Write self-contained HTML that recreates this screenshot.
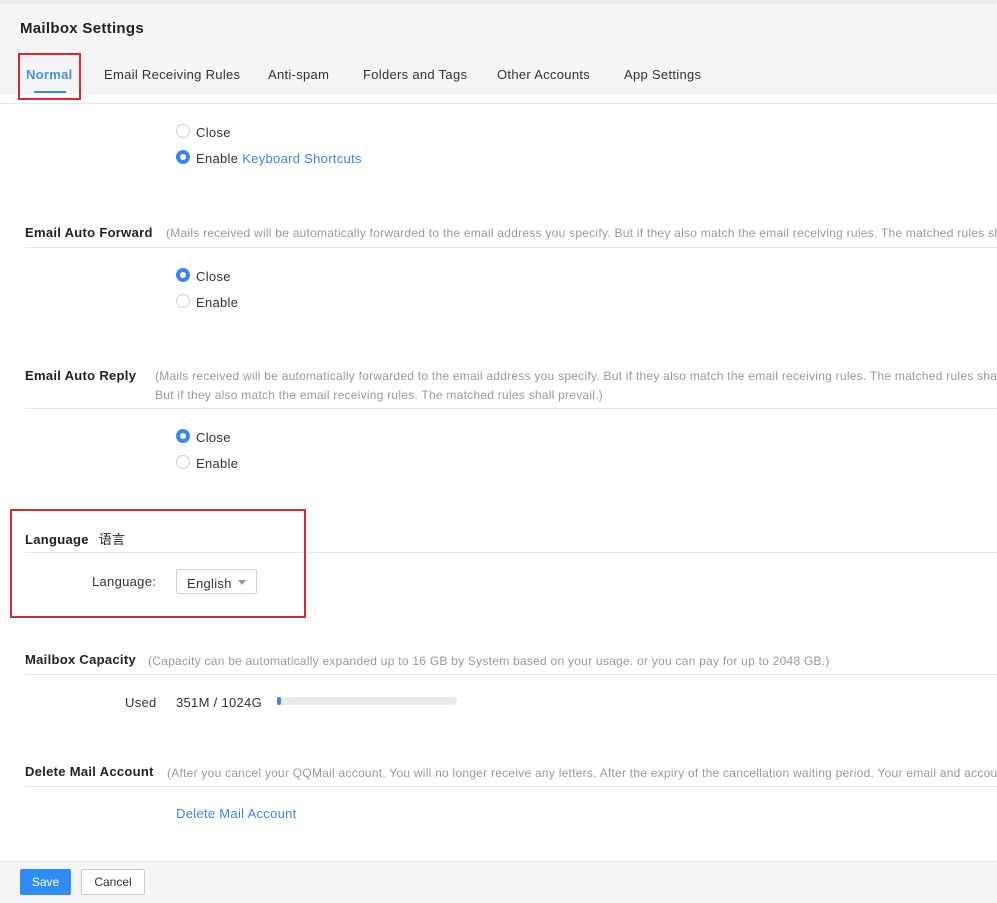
<!DOCTYPE html>
<html><head><meta charset="utf-8"><style>
*{margin:0;padding:0;box-sizing:border-box}
html,body{width:997px;height:903px;overflow:hidden}
body{background:#fff;font-family:"Liberation Sans","Noto Sans CJK SC",sans-serif;color:#333;font-size:13px;letter-spacing:0.3px}
#w{position:relative;width:997px;height:903px;overflow:hidden}
.a{position:absolute;white-space:nowrap}
.x{margin-top:2px}
.hdr{position:absolute;left:0;top:0;width:997px;height:94px;background:#f4f5f7;border-top:4px solid #ebebeb}
.t{font-weight:bold;font-size:13px;color:#222}
.d{font-size:12px;color:#999;letter-spacing:0.25px}
.line{position:absolute;left:25px;right:0;height:1px;background:#e8e8e8}
.r{position:absolute;width:14px;height:14px;border-radius:50%;border:1px solid #d0d0d0;background:#fff}
.r.on{border:4px solid #3a86f0}
.blue{color:#3a86e0}
.red{position:absolute;border:2px solid #d42a32}
</style></head><body><div id="w">
<div class="hdr"></div>
<div class="a x" style="left:20px;top:18px;font-size:15px;font-weight:bold;color:#222">Mailbox Settings</div>
<div class="a x" style="left:26px;top:65px;font-weight:bold;font-size:13px;color:#4a8fe0">Normal</div>
<div class="a" style="left:34px;top:91px;width:32px;height:2px;background:#3a86f0"></div>
<div class="red" style="left:18px;top:53px;width:63px;height:47px"></div>
<div class="a x" style="left:104px;top:65px">Email Receiving Rules</div>
<div class="a x" style="left:268px;top:65px">Anti-spam</div>
<div class="a x" style="left:363px;top:65px">Folders and Tags</div>
<div class="a x" style="left:497px;top:65px">Other Accounts</div>
<div class="a x" style="left:624px;top:65px">App Settings</div>
<div class="a" style="left:0;top:103px;width:997px;height:1px;background:#e6e6e6"></div>

<div class="r" style="left:176px;top:124px"></div><div class="a x" style="left:196px;top:123px">Close</div>
<div class="r on" style="left:176px;top:150px"></div><div class="a x" style="left:196px;top:149px">Enable <span class="blue">Keyboard Shortcuts</span></div>

<div class="a t x" style="left:25px;top:223px">Email Auto Forward</div>
<div class="a d x" style="left:166px;top:224px">(Mails received will be automatically forwarded to the email address you specify. But if they also match the email receiving rules. The matched rules shall prevail.)</div>
<div class="line" style="top:247px"></div>
<div class="r on" style="left:176px;top:268px"></div><div class="a x" style="left:196px;top:267px">Close</div>
<div class="r" style="left:176px;top:294px"></div><div class="a x" style="left:196px;top:293px">Enable</div>

<div class="a t x" style="left:25px;top:366px">Email Auto Reply</div>
<div class="a d x" style="left:155px;top:367px">(Mails received will be automatically forwarded to the email address you specify. But if they also match the email receiving rules. The matched rules shall prevail.</div>
<div class="a d x" style="left:155px;top:386px">But if they also match the email receiving rules. The matched rules shall prevail.)</div>
<div class="line" style="top:408px"></div>
<div class="r on" style="left:176px;top:429px"></div><div class="a x" style="left:196px;top:428px">Close</div>
<div class="r" style="left:176px;top:455px"></div><div class="a x" style="left:196px;top:454px">Enable</div>

<div class="a t x" style="left:25px;top:527px">Language <span style="font-weight:normal;margin-left:6px">语言</span></div>
<div class="line" style="top:552px"></div>
<div class="a x" style="left:92px;top:572px">Language:</div>
<div class="a" style="left:176px;top:569px;width:81px;height:25px;border:1px solid #d0d0d0;border-radius:2px;padding:6px 0 0 10px">English<span style="position:absolute;left:61px;top:10px;border-left:4px solid transparent;border-right:4px solid transparent;border-top:5px solid #999"></span></div>
<div class="red" style="left:10px;top:509px;width:296px;height:109px"></div>

<div class="a t x" style="left:25px;top:650px">Mailbox Capacity</div>
<div class="a d x" style="left:148px;top:652px">(Capacity can be automatically expanded up to 16 GB by System based on your usage. or you can pay for up to 2048 GB.)</div>
<div class="line" style="top:674px"></div>
<div class="a x" style="left:125px;top:693px">Used</div>
<div class="a x" style="left:176px;top:693px">351M / 1024G</div>
<div class="a" style="left:277px;top:697px;width:180px;height:8px;background:#ebebeb;border-radius:4px"><div style="width:4px;height:8px;background:#3a86f0;border-radius:2px"></div></div>

<div class="a t x" style="left:25px;top:762px">Delete Mail Account</div>
<div class="a d x" style="left:167px;top:764px">(After you cancel your QQMail account. You will no longer receive any letters. After the expiry of the cancellation waiting period. Your email and account will be deleted.)</div>
<div class="line" style="top:786px"></div>
<div class="a blue x" style="left:176px;top:804px">Delete Mail Account</div>

<div class="a" style="left:0;top:861px;width:997px;height:42px;background:#f4f5f7;border-top:1px solid #e4e4e4"></div>
<div class="a" style="left:20px;top:869px;width:51px;height:26px;background:#2f8cf5;border-radius:2px;color:#fff;font-size:12px;text-align:center;line-height:26px;letter-spacing:0">Save</div>
<div class="a" style="left:81px;top:869px;width:64px;height:26px;background:#fff;border:1px solid #ccc;border-radius:2px;font-size:12px;text-align:center;line-height:24px;color:#333;letter-spacing:0">Cancel</div>
</div></body></html>
